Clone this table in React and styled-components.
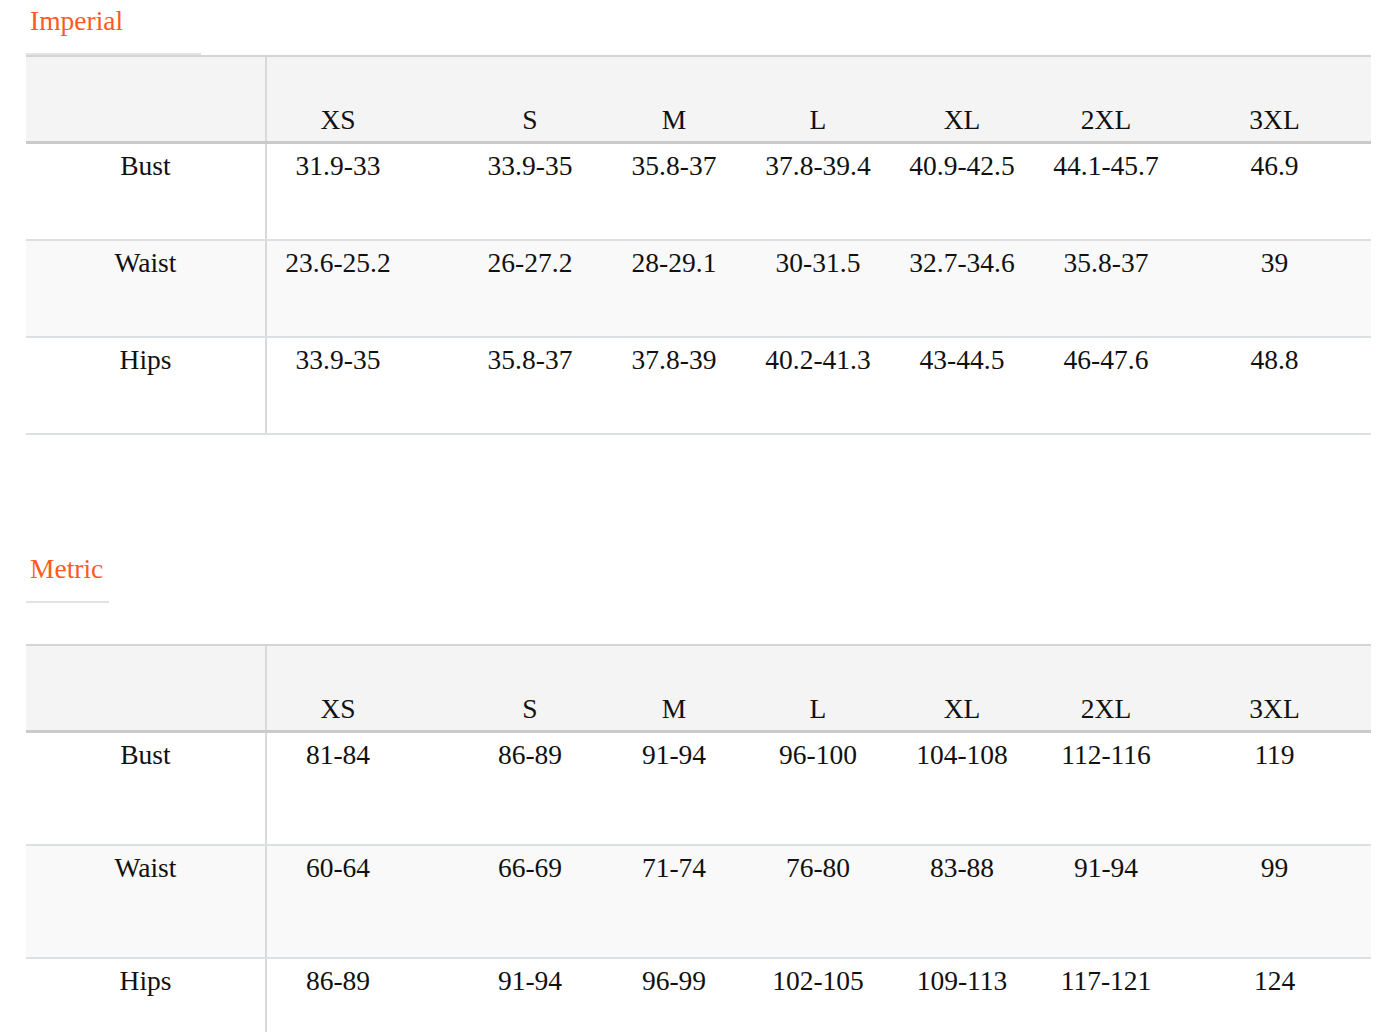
import React from "react";
import styled, { createGlobalStyle } from "styled-components";

const GlobalStyle = createGlobalStyle`
  body {
    margin: 0;
    background: #ffffff;
    font-family: "Liberation Serif", "Times New Roman", serif;
    color: #111111;
  }
`;

const COLS = "240px 192px 144px 144px 144px 144px 144px 1fr";

const Page = styled.div`
  padding: 0 9px 0 26px;
`;

const Section = styled.section`
  margin-top: ${(p) => p.top || 0}px;
`;

const Title = styled.h2`
  margin: 0 0 ${(p) => p.gap || 0}px;
  width: ${(p) => p.width}px;
  box-sizing: border-box;
  padding: 5px 0 16px 4px;
  border-bottom: 2px solid #e3e3e3;
  color: #ff5a1f;
  font-size: 27.5px;
  font-weight: normal;
  line-height: 32px;
`;

const Table = styled.div`
  border-top: 2px solid #d4d4d4;
  font-size: 27.5px;
  line-height: 32px;
`;

const HeadRow = styled.div`
  display: grid;
  grid-template-columns: ${COLS};
  height: 84px;
  background: #f4f4f4;
  border-bottom: 3px solid #cacaca;
`;

const Row = styled.div`
  display: grid;
  grid-template-columns: ${COLS};
  height: ${(p) => p.height}px;
  background: ${(p) => (p.shaded ? "#f9f9f9" : "#ffffff")};
  border-bottom: 2px solid #dde0e3;
`;

const Cell = styled.div`
  text-align: center;
  padding: ${(p) => (p.head ? "0 0 5px" : "6px 0 0")};
  padding-right: ${(p) => p.shift || 0}px;
  align-self: ${(p) => (p.head ? "end" : "start")};
  white-space: nowrap;
`;

const LabelCell = styled.div`
  text-align: center;
  padding-top: 6px;
  border-right: 2px solid #d9d9d9;
  margin-right: -1px;
`;

const sizes = ["XS", "S", "M", "L", "XL", "2XL", "3XL"];

const imperial = [
  { name: "Bust", values: ["31.9-33", "33.9-35", "35.8-37", "37.8-39.4", "40.9-42.5", "44.1-45.7", "46.9"] },
  { name: "Waist", values: ["23.6-25.2", "26-27.2", "28-29.1", "30-31.5", "32.7-34.6", "35.8-37", "39"] },
  { name: "Hips", values: ["33.9-35", "35.8-37", "37.8-39", "40.2-41.3", "43-44.5", "46-47.6", "48.8"] },
];

const metric = [
  { name: "Bust", values: ["81-84", "86-89", "91-94", "96-100", "104-108", "112-116", "119"] },
  { name: "Waist", values: ["60-64", "66-69", "71-74", "76-80", "83-88", "91-94", "99"] },
  { name: "Hips", values: ["86-89", "91-94", "96-99", "102-105", "109-113", "117-121", "124"] },
];

// XS column is wider than its text sits, push text left
const shiftFor = (i) => (i === 0 ? 48 : 0);

const SizeTable = ({ rows, rowHeight }) => (
  <Table>
    <HeadRow>
      <LabelCell />
      {sizes.map((s, i) => (
        <Cell head key={s} shift={shiftFor(i)}>
          {s}
        </Cell>
      ))}
    </HeadRow>
    {rows.map((r, idx) => (
      <Row key={r.name} height={rowHeight} shaded={idx === 1}>
        <LabelCell>{r.name}</LabelCell>
        {r.values.map((v, i) => (
          <Cell key={i} shift={shiftFor(i)}>
            {v}
          </Cell>
        ))}
      </Row>
    ))}
  </Table>
);

export default function App() {
  return (
    <>
      <GlobalStyle />
      <Page>
        <Section>
          <Title width={175}>Imperial</Title>
          <SizeTable rows={imperial} rowHeight={95} />
        </Section>
        <Section top={113}>
          <Title width={83} gap={41}>
            Metric
          </Title>
          <SizeTable rows={metric} rowHeight={111} />
        </Section>
      </Page>
    </>
  );
}
